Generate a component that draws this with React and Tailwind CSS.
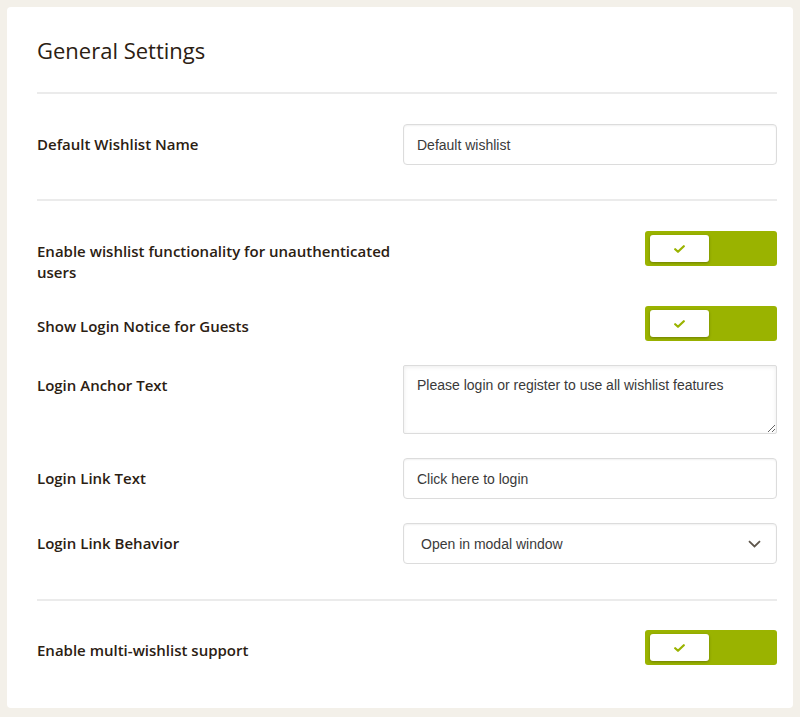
import { useState } from "react";

function Toggle({ defaultOn = true }) {
  const [on, setOn] = useState(defaultOn);
  return (
    <button
      type="button"
      onClick={() => setOn(!on)}
      className={`relative w-[132px] h-[35px] rounded-[3px] ${on ? "bg-[#9ab300]" : "bg-[#d6d6d6]"}`}
    >
      <span
        className={`absolute top-[4px] w-[59px] h-[27px] bg-white rounded-[3px] shadow-[0_1px_3px_rgba(0,0,0,0.3)] flex items-center justify-center ${
          on ? "left-[5px]" : "right-[5px]"
        }`}
      >
        <svg width="11" height="8" viewBox="0 0 11 8" fill="none">
          <path d="M1.2 4.2 L4 6.8 L9.8 1.2" stroke="#9ab300" strokeWidth="2.2" strokeLinecap="round" strokeLinejoin="round" />
        </svg>
      </span>
    </button>
  );
}

function Row({ label, children }) {
  return (
    <div className="flex items-start">
      <label className="w-[366px] pr-[10px] pt-[10px] -mb-[1px] text-[15px] leading-[21px] font-semibold text-[#2b2012]">
        {label}
      </label>
      <div className="flex-1 flex justify-end">{children}</div>
    </div>
  );
}

const inputCls =
  "w-full h-[41px] px-[13px] pt-[1px] border border-[#dcdcdc] rounded-[4px] bg-white text-[14px] text-[#3a3a3a] shadow-[inset_0_1px_2px_rgba(0,0,0,0.06)] focus:outline-none";

export default function App() {
  const [name, setName] = useState("Default wishlist");
  const [anchor, setAnchor] = useState("Please login or register to use all wishlist features");
  const [link, setLink] = useState("Click here to login");
  const [behavior, setBehavior] = useState("modal");

  return (
    <div className="min-h-[717px] bg-[#f3f0e9] p-[7px] font-['Open_Sans',sans-serif]">
      <div className="bg-white rounded-[4px] pl-[30px] pr-[16px] pt-[30px] pb-[30px]">
        <h1 className="text-[22px] leading-[26px] text-[#2b2012] mb-[29px]">General Settings</h1>

        <div className="border-t-2 border-[#ebebeb] pt-[30px] pb-[34px] flex flex-col gap-[24px]">
          <Row label="Default Wishlist Name">
            <input
              value={name}
              onChange={(e) => setName(e.target.value)}
              className={inputCls}
              style={{ fontFamily: "'Liberation Sans', Arial, sans-serif" }}
            />
          </Row>
        </div>

        <div className="border-t-2 border-[#ebebeb] pt-[30px] pb-[35px] flex flex-col gap-[24px]">
          <Row label="Enable wishlist functionality for unauthenticated users">
            <Toggle />
          </Row>
          <Row label="Show Login Notice for Guests">
            <Toggle />
          </Row>
          <Row label="Login Anchor Text">
            <textarea
              value={anchor}
              onChange={(e) => setAnchor(e.target.value)}
              className="w-full h-[69px] px-[13px] py-[9px] border border-[#dcdcdc] rounded-[2px] bg-white text-[14px] leading-[20px] text-[#3a3a3a] shadow-[inset_0_1px_4px_rgba(0,0,0,0.08)] focus:outline-none block"
              style={{ fontFamily: "'Liberation Sans', Arial, sans-serif" }}
            />
          </Row>
          <Row label="Login Link Text">
            <input
              value={link}
              onChange={(e) => setLink(e.target.value)}
              className={inputCls}
              style={{ fontFamily: "'Liberation Sans', Arial, sans-serif" }}
            />
          </Row>
          <Row label="Login Link Behavior">
            <div className="relative w-full">
              <select
                value={behavior}
                onChange={(e) => setBehavior(e.target.value)}
                className="appearance-none w-full h-[41px] pl-[17px] pr-[40px] pt-[1px] border border-[#dcdcdc] rounded-[4px] bg-white text-[14px] text-[#3a3a3a] shadow-[inset_0_1px_2px_rgba(0,0,0,0.06)] focus:outline-none"
                style={{ fontFamily: "'Liberation Sans', Arial, sans-serif" }}
              >
                <option value="modal">Open in modal window</option>
                <option value="page">Redirect to login page</option>
              </select>
              <svg
                className="absolute right-[16px] top-[17px] pointer-events-none"
                width="13"
                height="8"
                viewBox="0 0 13 8"
                fill="none"
              >
                <path d="M1 1.2 L6.5 6.4 L12 1.2" stroke="#5e564b" strokeWidth="1.8" />
              </svg>
            </div>
          </Row>
        </div>

        <div className="border-t-2 border-[#ebebeb] pt-[29px] pb-[13px] flex flex-col gap-[24px]">
          <Row label="Enable multi-wishlist support">
            <Toggle />
          </Row>
        </div>
      </div>
    </div>
  );
}
